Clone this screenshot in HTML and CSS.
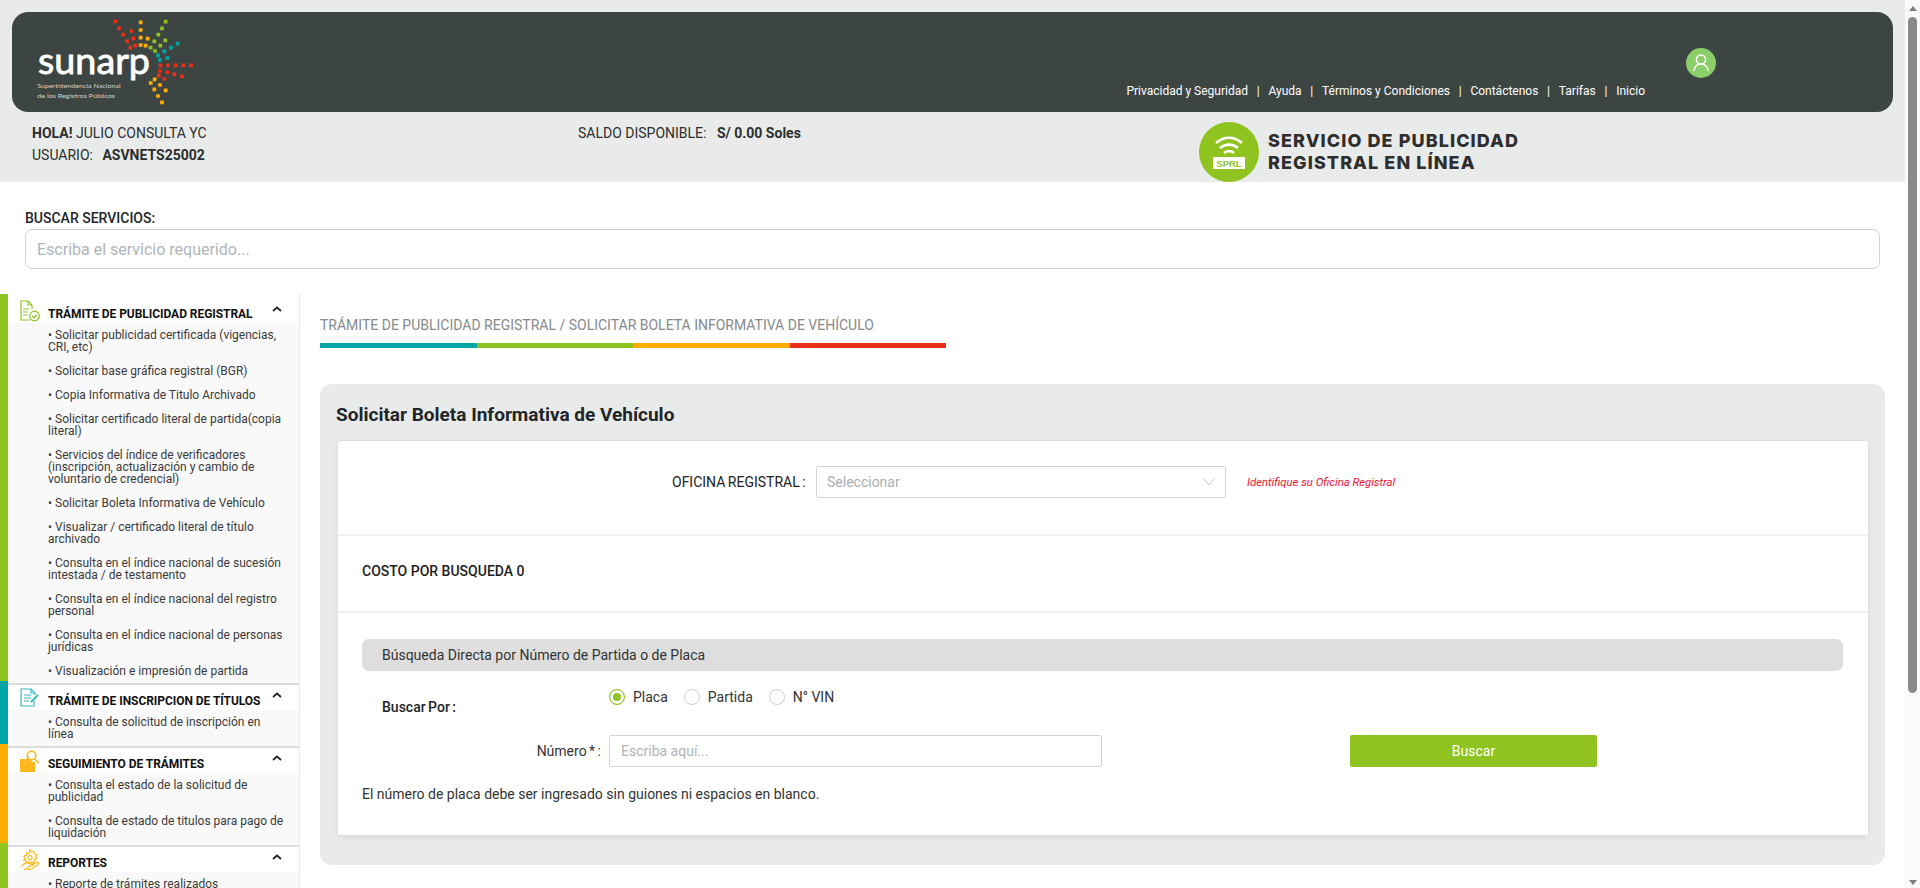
FILE: index.html
```html
<!DOCTYPE html>
<html lang="es">
<head>
<meta charset="utf-8">
<title>SUNARP - Solicitar Boleta Informativa de Vehículo</title>
<link rel="stylesheet" href="styles.css">
</head>
<body>
<div class="page">
  <div class="top">
    <header class="masthead">
      <svg class="logo" viewBox="90 36 516 300" aria-label="sunarp">
        <g class="dots">
          <path class="d-red" d="M346 64h.1M357 85h.1M369 104h.1M381 124h.1M391 143h.1M394 93h.1M400 115h.1M406 137h.1M573 196h.1M550 196h.1M527 196h.1M504 196h.1M482 197h.1M480 213h.1M502 217h.1M523 223h.1M546 229h.1M476 227h.1M493 237h.1"/>
          <path class="d-amber" d="M422 67h.1M422 90h.1M422 113h.1M422 135h.1M443 116h.1M437 137h.1M464 238h.1M452 249h.1M480 255h.1M463 268h.1M497 271h.1M474 288h.1M486 307h.1"/>
          <path class="d-green" d="M497 65h.1M486 85h.1M475 104h.1M463 124h.1M452 143h.1M496 121h.1M481 137h.1M465 153h.1"/>
          <path class="d-teal" d="M533 131h.1M513 143h.1M493 154h.1M474 166h.1M502 174h.1M480 180h.1"/>
        </g>
        <text class="logo-word" x="114" y="222" textLength="336" lengthAdjust="spacingAndGlyphs">sunarp</text>
        <text class="logo-tag" x="112" y="265" textLength="250" lengthAdjust="spacingAndGlyphs">Superintendencia Nacional</text>
        <text class="logo-tag" x="112" y="293" textLength="233" lengthAdjust="spacingAndGlyphs">de los Registros Públicos</text>
      </svg>
      <div class="mast-right">
        <nav class="links">
          <a>Privacidad y Seguridad</a><i>|</i><a>Ayuda</a><i>|</i><a>Términos y Condiciones</a><i>|</i><a>Contáctenos</a><i>|</i><a>Tarifas</a><i>|</i><a>Inicio</a>
        </nav>
        <span class="avatar">
          <svg viewBox="0 0 30 30" class="avatar-icon"><circle cx="15" cy="11.5" r="4.6"/><path d="M8 23c.6-4.600 3-7 7-7s6.400 2.400 7 7"/></svg>
        </span>
      </div>
    </header>
    <div class="infobar">
      <div class="who">
        <div><b>HOLA!</b> JULIO CONSULTA YC</div>
        <div class="who-user">USUARIO: <b>ASVNETS25002</b></div>
      </div>
      <div class="saldo">SALDO DISPONIBLE: <b>S/ 0.00 Soles</b></div>
      <div class="sprl">
        <svg class="sprl-badge" viewBox="0 0 60 60">
          <circle class="sprl-disc" cx="30" cy="30" r="30"/>
          <path class="sprl-wave" d="M17 21c8-7 18-7 26 0M21 26c5.500-4.500 12.500-4.500 18 0M25 31c3-2.500 7-2.500 10 0"/>
          <rect class="sprl-tag" x="14" y="35" width="32" height="12"/>
          <text class="sprl-tag-text" x="30" y="44.500" text-anchor="middle">SPRL</text>
        </svg>
        <div class="sprl-text">SERVICIO DE PUBLICIDAD<br>REGISTRAL EN LÍNEA</div>
      </div>
    </div>
  </div>

  <section class="search">
    <label class="search-label">BUSCAR SERVICIOS:</label>
    <div class="search-input">Escriba el servicio requerido...</div>
  </section>

  <div class="body">
    <aside class="sidebar">
      <div class="accents">
        <span class="acc acc-1"></span><span class="acc acc-2"></span><span class="acc acc-3"></span><span class="acc acc-4"></span>
      </div>
      <div class="menu">
        <section class="group group-first">
          <div class="group-head">
            <svg class="gi gi-green" viewBox="0 0 20 22"><path d="M12 9V5L8 1H1v19h9"/><path d="M8 1v4h4"/><path d="M3 9h6M3 12h5M3 15h5"/><circle cx="14.500" cy="16" r="4.800"/><path class="gi-tick" d="M12.300 16l1.700 1.700 2.900-3"/></svg>
            <h3>TRÁMITE DE PUBLICIDAD REGISTRAL</h3>
            <svg class="chev" viewBox="0 0 10 6"><path d="M1 5l4-3.500L9 5"/></svg>
          </div>
          <ul>
            <li>• Solicitar publicidad certificada (vigencias, CRI, etc)</li>
            <li>• Solicitar base gráfica registral (BGR)</li>
            <li>• Copia Informativa de Titulo Archivado</li>
            <li>• Solicitar certificado literal de partida(copia literal)</li>
            <li>• Servicios del índice de verificadores (inscripción, actualización y cambio de voluntario de credencial)</li>
            <li>• Solicitar Boleta Informativa de Vehículo</li>
            <li>• Visualizar / certificado literal de título archivado</li>
            <li>• Consulta en el índice nacional de sucesión intestada / de testamento</li>
            <li>• Consulta en el índice nacional del registro personal</li>
            <li>• Consulta en el índice nacional de personas jurídicas</li>
            <li>• Visualización e impresión de partida</li>
          </ul>
        </section>
        <section class="group">
          <div class="group-head">
            <svg class="gi gi-teal" viewBox="0 0 20 20"><path d="M15 7V5l-4-4H1v17h13v-5"/><path d="M11 1v4h4"/><path d="M4 7h7M4 10h7M4 13h5"/><path class="gi-pen" d="M11 14l7-7"/></svg>
            <h3>TRÁMITE DE INSCRIPCION DE TÍTULOS</h3>
            <svg class="chev" viewBox="0 0 10 6"><path d="M1 5l4-3.500L9 5"/></svg>
          </div>
          <ul>
            <li>• Consulta de solicitud de inscripción en línea</li>
          </ul>
        </section>
        <section class="group">
          <div class="group-head">
            <svg class="gi gi-amber" viewBox="0 0 20 22"><path class="gi-fill" d="M0 9h7l1-2h1c.4 3 2.500 5 6 5v10H1.500C.6 22 0 21.400 0 20.500z"/><circle class="gi-lens" cx="11.500" cy="5.500" r="4.300"/><path class="gi-lens" d="M14.500 9l4.500 4"/></svg>
            <h3>SEGUIMIENTO DE TRÁMITES</h3>
            <svg class="chev" viewBox="0 0 10 6"><path d="M1 5l4-3.500L9 5"/></svg>
          </div>
          <ul>
            <li>• Consulta el estado de la solicitud de publicidad</li>
            <li>• Consulta de estado de titulos para pago de liquidación</li>
          </ul>
        </section>
        <section class="group">
          <div class="group-head">
            <svg class="gi gi-amber" viewBox="0 0 20 23"><path d="M10 1l1.500 2 2.500-.5.500 2.500 2.500 1-1 2.500 1 2-2.500 1-.5 2.500-2.500-.5-1.500 1.500-1.500-1.500-2.500.5-.5-2.500L3.500 12l1-2-1-2.500L6 6.500l.5-2.500 2.500.5z"/><circle cx="10" cy="9" r="2.200"/><path d="M1 18l4-3c2-1 3 0 5 .5h3c1 .5 1 2-1 2h-3M13 16l4-2c2-.5 2.500 1 1.500 2L12 21c-2 1-4 0-6-.5L4 22z"/></svg>
            <h3>REPORTES</h3>
            <svg class="chev" viewBox="0 0 10 6"><path d="M1 5l4-3.500L9 5"/></svg>
          </div>
          <ul>
            <li>• Reporte de trámites realizados</li>
          </ul>
        </section>
      </div>
    </aside>

    <main class="content">
      <div class="crumb">TRÁMITE DE PUBLICIDAD REGISTRAL / SOLICITAR BOLETA INFORMATIVA DE VEHÍCULO</div>
      <div class="rainbow"><span class="r-teal"></span><span class="r-green"></span><span class="r-amber"></span><span class="r-red"></span></div>

      <section class="panel">
        <h2>Solicitar Boleta Informativa de Vehículo</h2>
        <div class="card">
          <div class="row-office">
            <label class="office-label">OFICINA REGISTRAL :</label>
            <div class="select">
              <span>Seleccionar</span>
              <svg viewBox="0 0 12 8" class="select-chev"><path d="M1 1l5 6 5-6"/></svg>
            </div>
            <span class="office-note">Identifique su Oficina Registral</span>
          </div>
          <div class="row-cost">COSTO POR BUSQUEDA 0</div>
          <div class="row-search">
            <div class="search-title">Búsqueda Directa por Número de Partida o de Placa</div>
            <div class="by">
              <span class="by-label">Buscar Por :</span>
              <div class="radios">
                <span class="radio"><i class="dot dot-on"></i>Placa</span>
                <span class="radio"><i class="dot"></i>Partida</span>
                <span class="radio"><i class="dot"></i>N° VIN</span>
              </div>
            </div>
            <div class="num">
              <label class="num-label">Número * :</label>
              <div class="num-input">Escriba aquí...</div>
              <button class="btn">Buscar</button>
            </div>
            <p class="hint">El número de placa debe ser ingresado sin guiones ni espacios en blanco.</p>
          </div>
        </div>
      </section>
    </main>
  </div>
</div>
<div class="scrollbar">
  <span class="sb-up"></span>
  <span class="sb-thumb"></span>
  <span class="sb-down"></span>
</div>
</body>
</html>
```
FILE: styles.css
```css
* { box-sizing: border-box; }
html, body { margin: 0; height: 100%; overflow: hidden; }
body {
  display: flex;
  font-family: Roboto, "Liberation Sans", sans-serif;
  font-size: 14px;
  color: #212529;
  background: #fff;
}
.page { flex: 1; min-width: 0; height: 888px; overflow: hidden; }

/* top */
.top { background: #e9ebea; height: 182px; padding: 12px 12px 0 12px; }
.masthead {
  height: 100px;
  background: #3d4543;
  border-radius: 16px;
  padding-left: 18px;
  display: flex;
  justify-content: space-between;
}
.logo { width: 172px; height: 100px; flex: none; }
.dots path { fill: none; stroke-width: 11; stroke-linecap: square; }
.d-red { stroke: #ea2e17; }
.d-amber { stroke: #ffae00; }
.d-green { stroke: #8fc31f; }
.d-teal { stroke: #00a6a6; }
.logo-word { font-family: Lato, sans-serif; font-size: 112px; fill: #fff; stroke: #fff; stroke-width: 2.500; }
.logo-tag { font-family: Lato, sans-serif; font-size: 18px; fill: #cfd3d2; }
.mast-right { display: flex; align-items: flex-start; padding-right: 177px; }
.links {
  display: flex;
  color: #fff;
  font-size: 12px;
  line-height: 14px;
  margin-top: 72px;
}
.links i { font-style: normal; padding: 0 8.750px; }
.avatar {
  width: 30px;
  height: 30px;
  border-radius: 50%;
  background: #8bcd68;
  margin: 36px 0 0 41px;
}
.avatar-icon { display: block; width: 30px; height: 30px; fill: none; stroke: #fff; stroke-width: 1.500; }

.infobar { display: flex; height: 70px; }
.who { width: 566px; padding: 10px 0 0 20px; line-height: 22px; color: #2b2f2e; }
.who b { font-weight: 700; }
.who-user { word-spacing: 6px; }
.saldo { width: 621px; padding-top: 10px; line-height: 22px; color: #2b2f2e; }
.saldo b { margin-left: 7px; font-weight: 700; }
.sprl { display: flex; align-items: flex-start; padding-top: 10px; }
.sprl-badge { width: 60px; height: 60px; flex: none; }
.sprl-disc { fill: #8fc31f; }
.sprl-wave { fill: none; stroke: #fff; stroke-width: 2.600; }
.sprl-tag { fill: #fff; }
.sprl-tag-text { font-family: "Liberation Sans", sans-serif; font-weight: 700; font-size: 9.500px; fill: #8fc31f; }
.sprl-text {
  margin-left: 9px;
  padding-top: 8px;
  font-family: Inter, "Liberation Sans", sans-serif;
  font-weight: 800;
  font-size: 18px;
  letter-spacing: 1.080px;
  line-height: 22px;
  color: #2e2e2e;
  white-space: nowrap;
}

/* search */
.search { padding: 28px 25px 0 25px; height: 112px; }
.search-label { display: block; font-weight: 500; font-size: 14px; line-height: 16px; color: #212529; margin-bottom: 3px; }
.search-input {
  height: 40px;
  border: 1px solid #ced4da;
  border-radius: 7px;
  padding: 0 11px;
  line-height: 39px;
  font-size: 16px;
  color: #b0b5ba;
}

/* sidebar */
.body { display: flex; align-items: flex-start; }
.sidebar { width: 300px; flex: none; display: flex; height: 594px; border-right: 1px solid #e9e9e9; overflow: hidden; }
.accents { width: 8px; flex: none; display: flex; flex-direction: column; }
.acc { display: block; }
.acc-1 { height: 387px; background: #8fc31f; }
.acc-2 { height: 63px; background: #00a6a6; }
.acc-3 { height: 99px; background: #ffae00; }
.acc-4 { flex: 1; background: #8fc31f; }
.menu { flex: 1; min-width: 0; }
.group { border-top: 2px solid #dcdcdc; }
.group-first { border-top: 0; }
.group-head {
  height: 25px;
  display: flex;
  align-items: flex-end;
  padding: 0 15px 2px 12px;
  position: relative;
  background: #fff;
}
.group-first .group-head { height: 29px; }
.group-head h3 {
  margin: 0 0 0 28px;
  font-size: 12px;
  line-height: 14px;
  font-weight: 700;
  letter-spacing: -.05px;
  color: #111;
  white-space: nowrap;
  flex: 1;
}
.gi { position: absolute; left: 12px; top: 2px; width: 20px; height: 22px; fill: none; stroke-width: 1.200; }
.group-first .gi { top: 6px; }
.gi-green { stroke: #8fc31f; }
.gi-teal { stroke: #3fb8bd; }
.gi-amber { stroke: #ffb81c; }
.gi-fill { fill: #ffb81c; stroke: none; }
.gi-lens { stroke-width: 1.600; }
.gi-tick { stroke-width: 1.400; }
.gi-pen { stroke-width: 2.200; }
.chev { position: absolute; right: 17px; top: 7px; width: 10px; height: 6px; fill: none; stroke: #222; stroke-width: 1.700; }
.group-first .chev { top: 12px; }
.group ul { margin: 0; padding: 0 13px 0 40px; list-style: none; background: #f9f9f9; }
.group li { padding: 6px 0; font-size: 12px; line-height: 12px; color: #3a3a3a; }

/* content */
.content { flex: 1; min-width: 0; padding: 0 20px; }
.crumb { margin-top: 20px; font-size: 14px; line-height: 22px; color: #868a8c; height: 29px; }
.rainbow { display: flex; width: 626px; height: 5px; }
.rainbow span { flex: 1; }
.r-teal { background: #00a6a6; }
.r-green { background: #8fc31f; }
.r-amber { background: #ffae00; }
.r-red { background: #ea2e17; }
.panel {
  margin-top: 36px;
  background: #e9ebea;
  border-radius: 12px;
  padding: 20px 17px 30px 16px;
  height: 481px;
  width: 1565px;
}
.panel h2 { margin: 0; font-size: 19px; line-height: 22px; font-weight: 700; color: #212529; }
.card {
  margin: 15px 0 0 2px;
  background: #fff;
  height: 394px;
  box-shadow: 0 2px 6px rgba(0, 0, 0, .08), 0 -1px 1px rgba(80, 90, 120, .08);
  border-radius: 2px;
  display: flex;
  flex-direction: column;
}
.row-office { height: 95px; border-bottom: 2px solid #f0f0f0; display: flex; padding: 25px 0 0 334px; }
.office-label { width: 144px; line-height: 32px; word-spacing: -1px; color: #222; white-space: nowrap; }
.select {
  width: 410px;
  height: 32px;
  border: 1px solid #d4d4d4;
  border-radius: 2px;
  padding: 0 10px;
  line-height: 30px;
  color: #a8adb0;
  display: flex;
  justify-content: space-between;
  align-items: center;
}
.select-chev { width: 12px; height: 8px; fill: none; stroke: #c4c4c4; stroke-width: 1; }
.office-note { margin-left: 21px; margin-top: 1px; font-size: 11.300px; font-style: italic; line-height: 32px; color: #f0142d; }
.row-cost { height: 77px; border-bottom: 2px solid #f0f0f0; padding: 25px 0 0 24px; font-weight: 500; line-height: 20px; color: #1d1d1d; }
.row-search { padding: 26px 25px 0 24px; flex: 1; }
.search-title { height: 32px; background: #dedede; border-radius: 7px; padding-left: 20px; line-height: 32px; color: #333; }
.by { display: flex; height: 64px; }
.by-label { width: 247px; padding: 26px 0 0 20px; font-weight: 500; line-height: 20px; word-spacing: -1px; color: #212529; }
.radios { display: flex; padding-top: 17px; line-height: 18px; color: #333; }
.radio { display: flex; align-items: center; height: 18px; margin-right: 16px; }
.dot { width: 16px; height: 16px; border-radius: 50%; border: 1px solid #d0d0d0; margin-right: 8px; background: #fff; }
.dot-on { border-color: #8fc31f; background: #8fc31f; box-shadow: inset 0 0 0 3px #fff; }
.num { display: flex; height: 32px; }
.num-label { width: 247px; padding-right: 8px; text-align: right; line-height: 32px; color: #333; white-space: nowrap; word-spacing: -1px; }
.num-input {
  width: 493px;
  height: 32px;
  border: 1px solid #d4d4d4;
  border-radius: 2px;
  padding: 0 11px;
  font-size: 14px;
  line-height: 30px;
  color: #b0b3b5;
}
.btn {
  margin-left: 248px;
  width: 247px;
  height: 32px;
  border: 0;
  border-radius: 2px;
  background: #8fc31f;
  color: #fff;
  font: 14px/32px Roboto, sans-serif;
  padding: 0;
}
.hint { margin: 17px 0 0; line-height: 20px; color: #333; }

/* scrollbar */
.scrollbar {
  width: 15px;
  flex: none;
  height: 888px;
  background: #fafafa;
  display: flex;
  flex-direction: column;
  align-items: center;
}
.sb-thumb { width: 9px; height: 676px; background: #8a8a8a; border-radius: 5px; flex: none; }
.sb-up { margin: 6px 0; width: 0; height: 0; flex: none; border-left: 4.500px solid transparent; border-right: 4.500px solid transparent; border-bottom: 5px solid #7d7d7d; }
.sb-down { margin-top: auto; margin-bottom: 3px; width: 0; height: 0; flex: none; border-left: 4.500px solid transparent; border-right: 4.500px solid transparent; border-top: 5px solid #7d7d7d; }
```
